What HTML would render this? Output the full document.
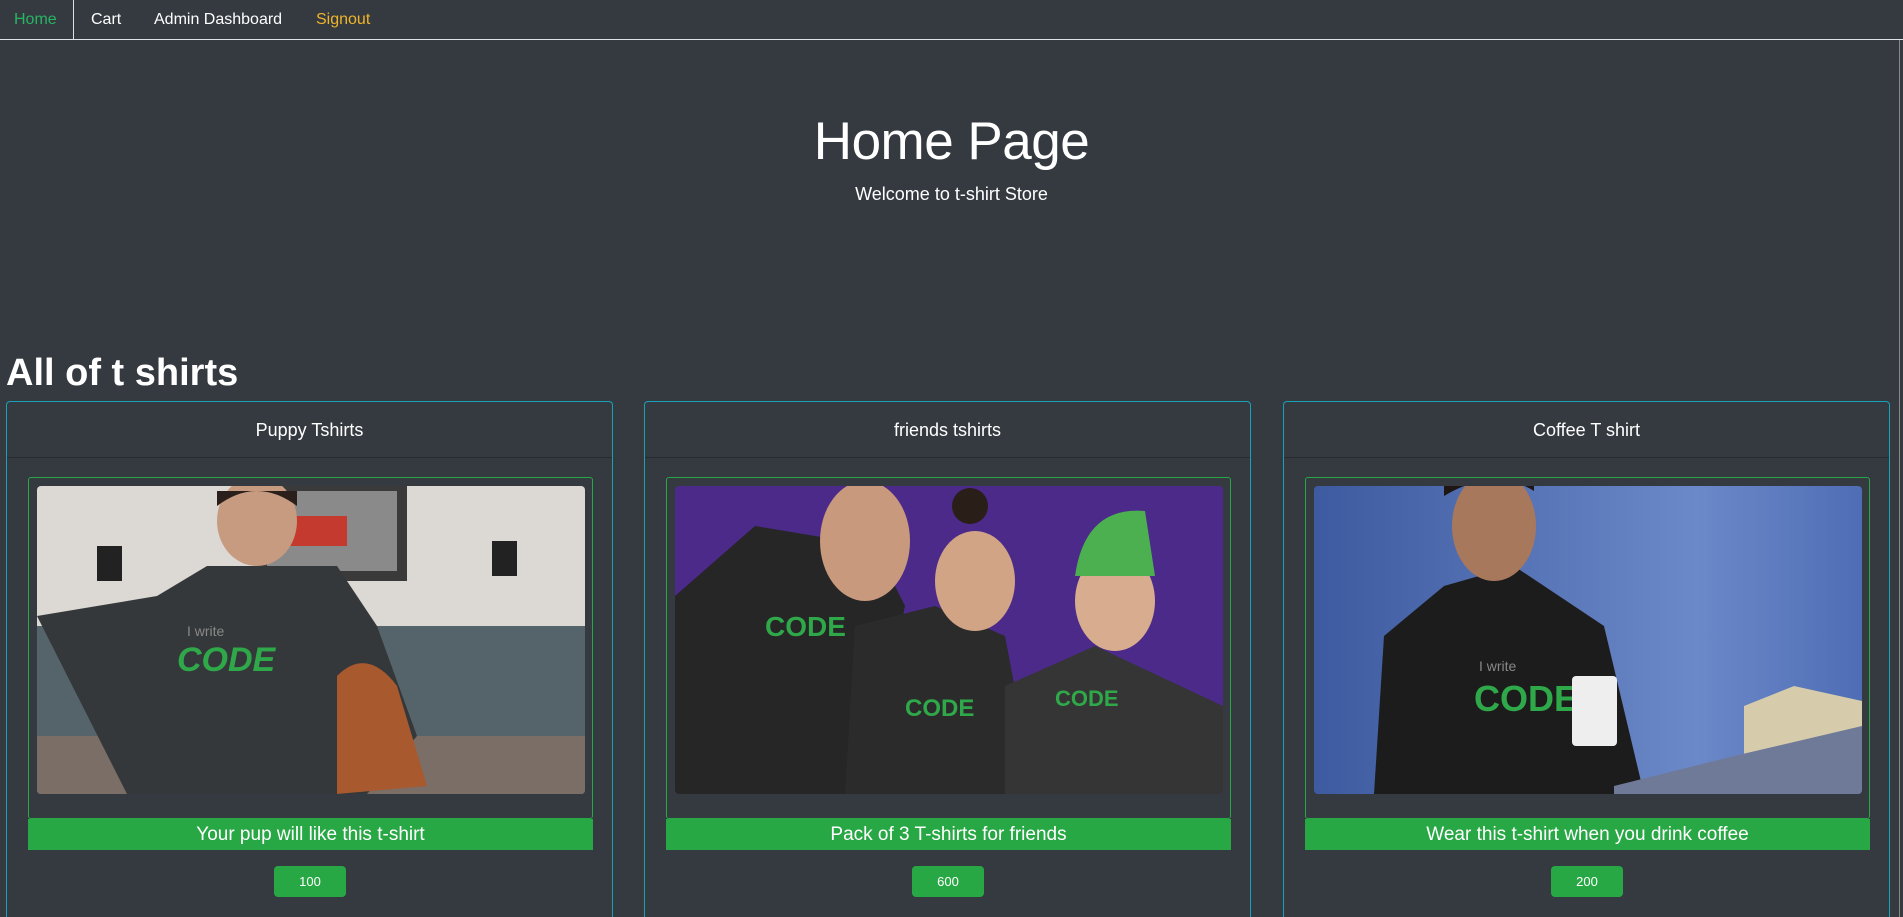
<!DOCTYPE html>
<html><head><meta charset="utf-8"><style>
*{box-sizing:border-box;margin:0;padding:0}
html,body{width:1903px;height:917px;overflow:hidden;background:#343a40;font-family:"Liberation Sans",sans-serif;color:#fff}
.nav{position:absolute;left:0;top:0;width:1903px;height:40px;border-bottom:1px solid #dee2e6}
.nav a{position:absolute;top:11px;font-size:16px;color:#fff;text-decoration:none}
.sep{position:absolute;left:73px;top:0;width:1px;height:39px;background:#dee2e6}
h1.hp{position:absolute;left:0;width:1903px;top:110px;text-align:center;font-weight:300;font-size:53px;line-height:64px;letter-spacing:-0.5px}
.lead{position:absolute;left:0;width:1903px;top:184px;text-align:center;font-size:18px;font-weight:300}
h2{position:absolute;left:6px;top:350px;font-size:38px;font-weight:bold;line-height:46px}
.card{position:absolute;top:401px;width:607px;height:516px;border:1px solid #17a2b8;border-bottom:none;border-radius:4px 4px 0 0}
.hd{height:56px;border-bottom:1px solid rgba(0,0,0,.25);text-align:center;font-size:18px;font-weight:300;line-height:56px}
.box{position:absolute;left:21px;top:75px;width:565px;height:342px;border:1px solid #28a745;border-radius:3px}
.img{position:absolute;left:8px;top:8px;width:548px;height:308px;border-radius:4px;overflow:hidden}
.bar{position:absolute;left:21px;top:417px;width:565px;height:31px;background:#28a745;text-align:center;font-size:19px;line-height:31px}
.btn{position:absolute;left:267px;top:464px;width:72px;height:31px;background:#28a745;border-radius:4px;text-align:center;font-size:13px;line-height:31px}
.sb{position:absolute;left:1899px;top:40px;width:1px;height:877px;background:#888}
</style></head><body>
<div class="nav">
<a style="left:14px;color:#28b463">Home</a><div class="sep"></div>
<a style="left:91px">Cart</a>
<a style="left:154px">Admin Dashboard</a>
<a style="left:316px;color:#f0b429">Signout</a>
</div>
<h1 class="hp">Home Page</h1>
<div class="lead">Welcome to t-shirt Store</div>
<h2>All of t shirts</h2>

<div class="card" style="left:6px"><div class="hd">Puppy Tshirts</div>
<div class="box"><div class="img"><svg width="548" height="308" viewBox="0 0 548 308">
<rect width="548" height="308" fill="#dcd8d4"/><rect x="220" y="0" width="150" height="95" fill="#3a3a3a"/><rect x="230" y="5" width="130" height="80" fill="#8a8a8a"/><rect x="250" y="30" width="60" height="30" fill="#c43a2e"/>
<rect x="0" y="140" width="548" height="168" fill="#55646a"/><rect x="0" y="250" width="548" height="58" fill="#7a6e66"/>
<rect x="60" y="60" width="25" height="35" fill="#222"/><rect x="455" y="55" width="25" height="35" fill="#222"/>
<path d="M0 130 L120 110 L170 80 L300 80 L340 140 L380 250 L330 308 L90 308 Z" fill="#35383a"/>
<ellipse cx="220" cy="35" rx="40" ry="45" fill="#c79b80"/><path d="M180 20 Q220 -10 260 20 L260 5 L180 5Z" fill="#2a1f1a"/>
<text x="150" y="150" fill="#888" font-size="14" font-family="Liberation Sans">I write</text>
<text x="140" y="185" fill="#2fa84a" font-size="34" font-weight="bold" font-style="italic" font-family="Liberation Sans">CODE</text>
<path d="M300 190 Q330 160 360 200 L390 300 L300 308 Z" fill="#a8592e"/>
</svg></div></div>
<div class="bar">Your pup will like this t-shirt</div><div class="btn">100</div></div>

<div class="card" style="left:644px"><div class="hd">friends tshirts</div>
<div class="box"><div class="img"><svg width="548" height="308" viewBox="0 0 548 308">
<rect width="548" height="308" fill="#4b2a8a"/>
<path d="M0 110 L80 40 L200 60 L230 120 L190 308 L0 308Z" fill="#262626"/>
<ellipse cx="190" cy="55" rx="45" ry="60" fill="#c8997c"/>
<path d="M180 140 L260 120 L330 150 L360 308 L170 308Z" fill="#2b2b2b"/>
<ellipse cx="300" cy="95" rx="40" ry="50" fill="#d2a486"/><circle cx="295" cy="20" r="18" fill="#2a1e18"/>
<path d="M330 200 L420 160 L548 220 L548 308 L330 308Z" fill="#353535"/>
<ellipse cx="440" cy="115" rx="40" ry="50" fill="#d8ac8e"/><path d="M400 90 Q410 20 470 25 L480 90Z" fill="#4caf50"/>
<text x="90" y="150" fill="#2fa84a" font-size="28" font-weight="bold" font-family="Liberation Sans">CODE</text>
<text x="230" y="230" fill="#2fa84a" font-size="24" font-weight="bold" font-family="Liberation Sans">CODE</text>
<text x="380" y="220" fill="#2fa84a" font-size="22" font-weight="bold" font-family="Liberation Sans">CODE</text>
</svg></div></div>
<div class="bar">Pack of 3 T-shirts for friends</div><div class="btn">600</div></div>

<div class="card" style="left:1283px"><div class="hd">Coffee T shirt</div>
<div class="box"><div class="img"><svg width="548" height="308" viewBox="0 0 548 308">
<defs><linearGradient id="b" x1="0" x2="1"><stop offset="0" stop-color="#3e5aa0"/><stop offset=".7" stop-color="#6b89c8"/><stop offset="1" stop-color="#4f6db5"/></linearGradient></defs>
<rect width="548" height="308" fill="url(#b)"/>
<path d="M70 150 L130 100 L200 80 L290 140 L330 308 L60 308Z" fill="#1c1c1c"/>
<ellipse cx="180" cy="40" rx="42" ry="55" fill="#a8785c"/><path d="M130 10 Q180 -20 220 5 L220 0 L130 0Z" fill="#1e1612"/>
<text x="165" y="185" fill="#888" font-size="14" font-family="Liberation Sans">I write</text>
<text x="160" y="225" fill="#2fa84a" font-size="36" font-weight="bold" font-family="Liberation Sans">CODE</text>
<rect x="258" y="190" width="45" height="70" rx="4" fill="#eee"/>
<path d="M430 220 L480 200 L548 215 L548 280 L430 280Z" fill="#d6ccab"/>
<path d="M300 300 L420 270 L548 240 L548 308 L300 308Z" fill="#6f7a99"/>
</svg></div></div>
<div class="bar">Wear this t-shirt when you drink coffee</div><div class="btn">200</div></div>
<div class="sb"></div>
</body></html>
